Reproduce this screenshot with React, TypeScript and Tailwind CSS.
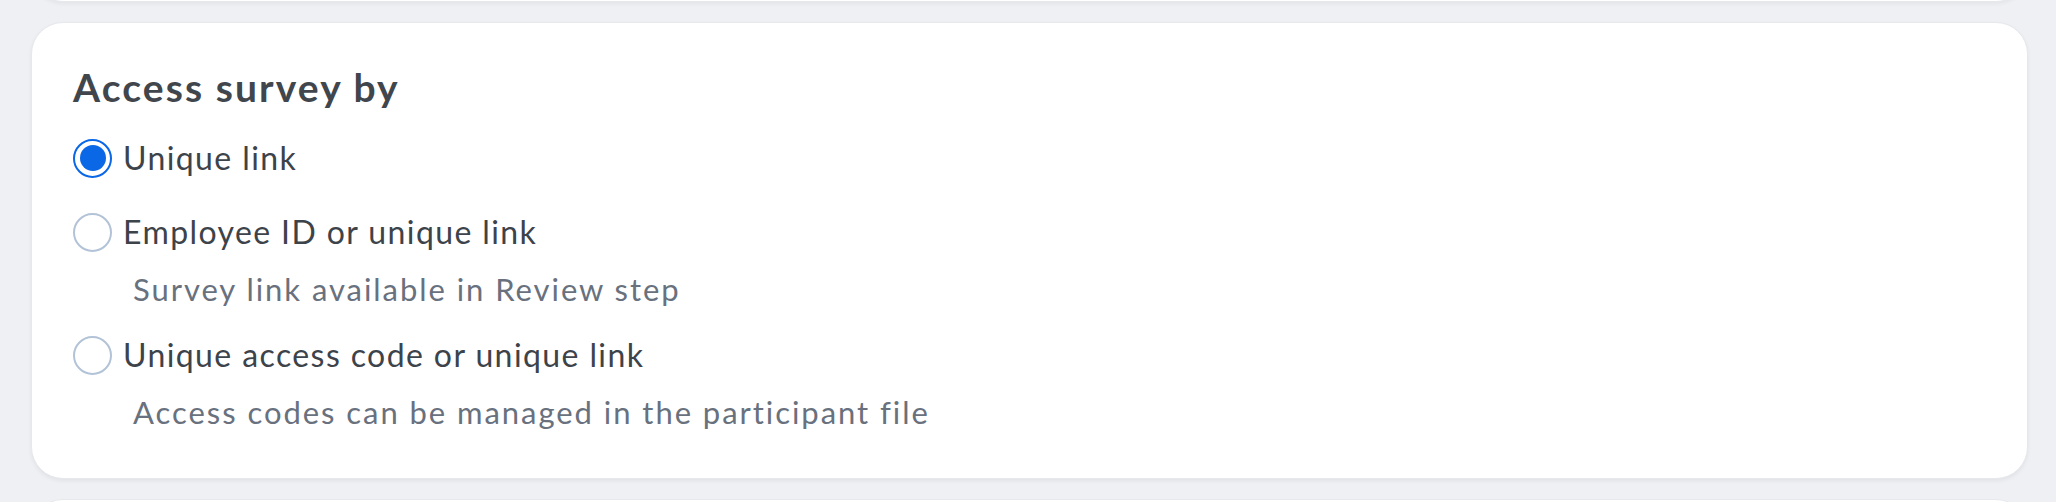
type Option = {
  id: string;
  label: string;
  hint?: string;
};

const options: Option[] = [
  { id: "link", label: "Unique link" },
  { id: "employee", label: "Employee ID or unique link", hint: "Survey link available in Review step" },
  { id: "code", label: "Unique access code or unique link", hint: "Access codes can be managed in the participant file" },
];

function Radio({ checked }: { checked: boolean }) {
  if (checked) {
    return (
      <span className="flex h-[39px] w-[39px] shrink-0 items-center justify-center rounded-full border-[2px] border-[#0a67e6] bg-white">
        <span className="h-[26px] w-[26px] rounded-full bg-[#0a67e6]" />
      </span>
    );
  }
  return <span className="h-[39px] w-[39px] shrink-0 rounded-full border-[2px] border-[#b3c3d7] bg-white" />;
}

export default function App() {
  const selected = "link";

  return (
    <div className="h-[502px] overflow-hidden bg-[#eff0f4] pl-[31px] pr-[28px] font-['Lato',sans-serif]">
      <div className="flex flex-col gap-[20px]">
        {/* card above, mostly scrolled off */}
        <div className="-mt-[100px] h-[102px] rounded-[32px] border border-[#e6e8ec] bg-white shadow-[0_2px_4px_rgba(0,0,0,0.05)]" />

        {/* ACCESS CARD */}
        <div className="h-[457px] rounded-[32px] border border-[#e6e8ec] bg-white px-[41px] pt-[38px] shadow-[0_2px_4px_rgba(0,0,0,0.06)]">
          <h2 className="text-[39px] font-bold leading-[52px] tracking-[2.1px] text-[#41464d]">Access survey by</h2>

          <div className="mt-[25px] flex flex-col">
            {options.map((o, i) => (
              <div key={o.id} className={i === 0 ? "" : options[i - 1].hint ? "mt-[26px]" : "mt-[34px]"}>
                <label className="flex items-center gap-[11px]">
                  <Radio checked={o.id === selected} />
                  <span className="text-[32px] leading-[40px] tracking-[1.4px] text-[#3d434a]">{o.label}</span>
                </label>
                {o.hint && (
                  <p className="ml-[60px] mt-[17px] text-[31px] leading-[40px] tracking-[1.95px] text-[#68717d]">
                    {o.hint}
                  </p>
                )}
              </div>
            ))}
          </div>
        </div>

        <div className="h-[100px] rounded-[32px] border border-[#e6e8ec] bg-white" />
      </div>
    </div>
  );
}
